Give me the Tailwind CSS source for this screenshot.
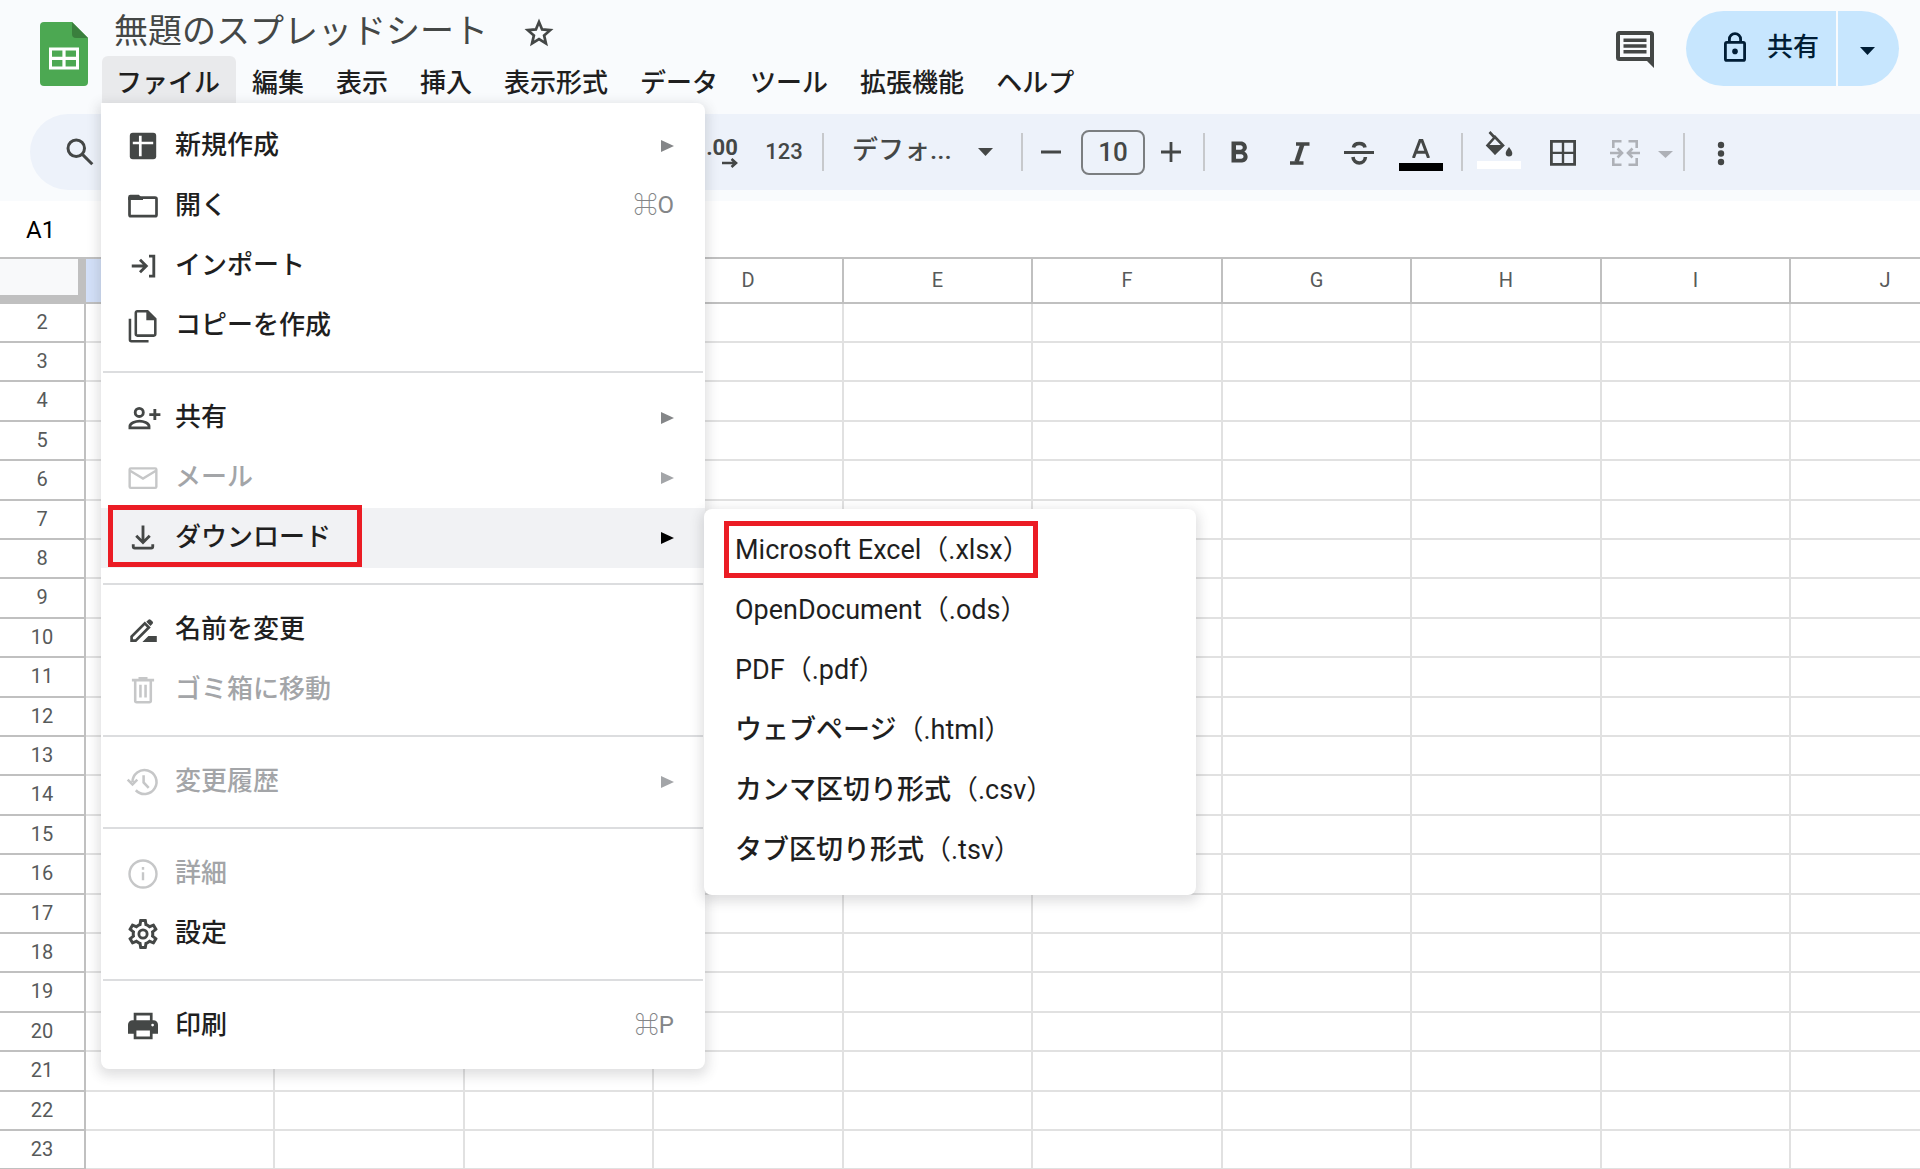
<!DOCTYPE html>
<html lang="ja">
<head>
<meta charset="utf-8">
<meta name="viewport" content="width=device-width, initial-scale=1">
<title>無題のスプレッドシート</title>
<script src="https://cdn.jsdelivr.net/npm/@tailwindcss/browser@4"></script>
</head>
<body class="flex h-screen flex-col overflow-hidden bg-white font-['Roboto','Noto_Sans_CJK_JP',sans-serif] text-[26px] leading-8 text-[#1f1f1f]">

<header class="relative shrink-0 bg-[#f9fbfd] pb-[11px]">
  <div class="flex h-[114px] items-start">
    <a href="#" aria-label="スプレッドシート ホーム" class="ml-10 mt-[22px] shrink-0">
      <svg class="h-16 w-12" viewBox="0 0 48 64"><path d="M4 0h28l16 16v44a4 4 0 0 1-4 4H4a4 4 0 0 1-4-4V4a4 4 0 0 1 4-4z" fill="#4ca852"/><path d="M32 0l16 16H36a4 4 0 0 1-4-4z" fill="#3a7f3d"/><path fill="#fff" fill-rule="evenodd" d="M9 25.500h30v22H9zM12 28.500v6.200h10.400v-6.200zM25.600 28.500v6.200H36v-6.200zM12 38v6.500h10.400V38zM25.600 38v6.500H36V38z"/></svg>
    </a>
    <div class="ml-3.5 flex flex-col">
      <div class="flex h-14 items-center">
        <input type="text" aria-label="ファイル名" value="無題のスプレッドシート" class="ml-3 h-12 w-[400px] bg-transparent text-[34px] text-[#444746] outline-none">
        <button aria-label="スターを付ける" class="ml-2 mt-2.5 text-[#444746]">
          <svg class="size-[34px]" viewBox="0 0 24 24" fill="none" stroke="currentColor" stroke-width="1.900"><path d="M12 4.200l2.200 5.300 5.700.500-4.300 3.700 1.300 5.600L12 16.300l-4.900 3 1.300-5.600L4.100 10l5.700-.500z"/></svg>
        </button>
      </div>
      <nav class="flex" aria-label="メニューバー">
        <button class="h-[52px] rounded-t-md bg-[#e9eaec] pl-3.5 pr-4 pt-0.5 font-medium">ファイル</button>
        <button class="h-[52px] px-4 pt-0.5 font-medium">編集</button>
        <button class="h-[52px] px-4 pt-0.5 font-medium">表示</button>
        <button class="h-[52px] px-4 pt-0.5 font-medium">挿入</button>
        <button class="h-[52px] px-4 pt-0.5 font-medium">表示形式</button>
        <button class="h-[52px] px-4 pt-0.5 font-medium">データ</button>
        <button class="h-[52px] px-4 pt-0.5 font-medium">ツール</button>
        <button class="h-[52px] px-4 pt-0.5 font-medium">拡張機能</button>
        <button class="h-[52px] px-4 pt-0.5 font-medium">ヘルプ</button>
      </nav>
    </div>
    <button aria-label="コメント" class="ml-auto mr-8 mt-[31px] text-[#444746]">
      <svg class="h-[37px] w-[38px]" viewBox="0 0 38 37"><path fill="currentColor" fill-rule="evenodd" d="M3.500 0h31A3.500 3.500 0 0 1 38 3.500V37l-7-7H3.500A3.500 3.500 0 0 1 0 26.500v-23A3.500 3.500 0 0 1 3.500 0zM4 4v22h30V4z"/><path stroke="currentColor" stroke-width="3.600" d="M7.500 9.200h23M7.500 15h23M7.500 20.800h23"/></svg>
    </button>
    <div class="mr-[21px] mt-[11px] flex h-[75px] shrink-0 gap-0.5 font-medium text-[#001d35]">
      <button class="flex w-[150px] items-center gap-5 rounded-l-full bg-[#c7e6fe] pl-[37px]">
        <svg class="-mt-1 h-[30px] w-6" viewBox="0 0 24 30" fill="none" stroke="currentColor" stroke-width="2.800"><rect x="2.400" y="10.400" width="19.200" height="18" rx="1.500"/><path d="M6.400 10V7.200a5.600 5.600 0 0 1 11.200 0V10"/><circle cx="12" cy="19.400" r="2.800" fill="currentColor" stroke="none"/></svg>
        <span class="pb-1">共有</span>
      </button>
      <button aria-label="共有オプション" class="flex w-[61px] items-center rounded-r-full bg-[#c7e6fe] pl-[22px] pt-1">
        <svg class="h-2 w-[15px]" viewBox="0 0 15 8" fill="currentColor"><path d="M0 0h15L7.500 8z"/></svg>
      </button>
    </div>
  </div>

  <div role="toolbar" aria-label="メイン" class="ml-[30px] flex h-[76px] items-center overflow-hidden rounded-l-full bg-[#edf2fa] pl-5 text-[#444746]">
    <button aria-label="メニューを検索" class="flex w-[60px] shrink-0 justify-center">
      <svg class="size-9" viewBox="0 0 24 24" fill="none" stroke="currentColor" stroke-width="2"><circle cx="9.500" cy="9.500" r="5.500"/><path d="M13.600 13.600l6.600 6.600"/></svg>
    </button>
    <button aria-label="小数点以下の桁数を増やす" class="ml-[588px] flex w-12 shrink-0 flex-col items-center text-[22px] font-bold leading-6">
      <span>.00</span>
      <svg class="-mt-0.5 ml-4 h-2.5 w-4" viewBox="0 0 16 10" fill="none" stroke="currentColor" stroke-width="2.600"><path d="M0 5h13M9.500 1l4.500 4-4.500 4"/></svg>
    </button>
    <button class="ml-2 w-[60px] shrink-0 text-[22px] font-medium">123</button>
    <span class="ml-2 h-[38px] w-0.5 shrink-0 bg-[#c7c9cc]"></span>
    <div class="relative ml-4 w-[165px] shrink-0">
      <select aria-label="フォント" class="w-full appearance-none bg-transparent pb-1 pl-3 font-medium outline-none"><option>デフォ...</option></select>
      <svg class="pointer-events-none absolute right-3 top-3.5 h-2 w-[15px]" viewBox="0 0 15 8" fill="currentColor"><path d="M0 0h15L7.500 8z"/></svg>
    </div>
    <span class="ml-4 h-[38px] w-0.5 shrink-0 bg-[#c7c9cc]"></span>
    <button aria-label="フォントサイズを縮小" class="ml-2 flex w-10 shrink-0 justify-center">
      <svg class="size-5" viewBox="0 0 20 20" stroke="currentColor" stroke-width="2.800"><path d="M0 10h20"/></svg>
    </button>
    <input type="text" aria-label="フォントサイズ" value="10" class="ml-2.5 h-[45px] w-16 shrink-0 rounded-lg border-2 border-[#7b7e80] bg-transparent text-center font-medium outline-none">
    <button aria-label="フォントサイズを拡大" class="ml-1.5 flex w-10 shrink-0 justify-center">
      <svg class="size-5" viewBox="0 0 20 20" stroke="currentColor" stroke-width="2.800"><path d="M0 10h20M10 0v20"/></svg>
    </button>
    <span class="ml-3 h-[38px] w-0.5 shrink-0 bg-[#c7c9cc]"></span>
    <button aria-label="太字" class="ml-1 flex w-[60px] shrink-0 justify-center">
      <svg class="size-9" viewBox="0 -1 24 24" fill="currentColor"><path d="M15.600 10.790c.970-.670 1.650-1.770 1.650-2.790 0-2.260-1.750-4-4-4H7v14h7.040c2.090 0 3.710-1.700 3.710-3.790 0-1.520-.860-2.820-2.150-3.420zM10 6.500h3c.830 0 1.500.670 1.500 1.500s-.670 1.500-1.500 1.500h-3v-3zm3.500 9H10v-3h3.500c.830 0 1.500.670 1.500 1.500s-.670 1.500-1.500 1.500z"/></svg>
    </button>
    <button aria-label="斜体" class="flex w-[60px] shrink-0 justify-center">
      <svg class="size-9" viewBox="0 0 36 36" fill="none" stroke="currentColor" stroke-width="3.600"><path d="M15 10h13.500M9 29h13.500"/><path stroke-width="4.400" d="M21.500 10l-6 18"/></svg>
    </button>
    <button aria-label="取り消し線" class="flex w-[60px] shrink-0 justify-center">
      <svg class="size-9" viewBox="0 0 36 36" fill="none" stroke="currentColor" stroke-width="3"><path d="M3 18.500h30"/><path stroke-width="3.600" d="M12.500 13.500c.500-2.800 3-4 5.800-4s5.200 1.200 5.700 4M12 23c.300 4 3.300 6 6.200 6s6-2 6.200-6"/></svg>
    </button>
    <button aria-label="テキストの色" class="flex w-16 shrink-0 flex-col items-center pt-1.5">
      <svg class="h-[19px] w-[18px]" viewBox="0 0 18 19" fill="none" stroke="currentColor" stroke-width="3"><path d="M1.400 19L8 1.500h2L16.600 19M4 13.200h10"/></svg>
      <span class="mt-[5px] h-2 w-11 bg-black"></span>
    </button>
    <span class="ml-2 h-[38px] w-0.5 shrink-0 bg-[#c7c9cc]"></span>
    <button aria-label="塗りつぶしの色" class="ml-1.5 flex w-[60px] shrink-0 flex-col items-center">
      <svg class="h-[26px] w-7" viewBox="0 0 28 26" fill="none" stroke="currentColor" stroke-width="2.600"><path d="M4.500 1l5.500 6M10 6L2.500 14.500 10 22l8-7.500z"/><path fill="currentColor" stroke="none" d="M1.500 14h18L10 24zM24 16c2 2.800 3.300 4.500 3.300 6.300a3.300 3.300 0 0 1-6.600 0C20.700 20.500 22 18.800 24 16z"/></svg>
      <span class="mb-1 mt-1 h-2 w-11 bg-white"></span>
    </button>
    <button aria-label="枠線" class="ml-1 flex w-[60px] shrink-0 justify-center">
      <svg class="size-7" viewBox="0 0 28 28" fill="none" stroke="currentColor" stroke-width="2.800"><path d="M2.400 3.400h23.200v23H2.400z"/><path stroke-width="2.400" d="M14 3.400v23M2.400 14.900h23.200"/></svg>
    </button>
    <button aria-label="セルを結合" disabled class="ml-0.5 flex w-[60px] shrink-0 justify-center text-[#aeb1b7]">
      <svg class="h-7 w-[30px]" viewBox="0 0 30 28" fill="none" stroke="currentColor" stroke-width="2.600"><path d="M11.500 3.300H3.300V10M18.500 3.300h8.200V10M11.500 26.700H3.300V20M18.500 26.700h8.200V20M0 15h11M30 15H19M7.500 10.500L12 15l-4.500 4.500M22.500 10.500L18 15l4.500 4.500"/></svg>
    </button>
    <button aria-label="結合の種類を選択" disabled class="flex w-5 shrink-0 justify-center pt-1 text-[#aeb1b7]">
      <svg class="h-[7px] w-[15px]" viewBox="0 0 15 7" fill="currentColor"><path d="M0 0h15L7.500 7z"/></svg>
    </button>
    <span class="ml-2 h-[38px] w-0.5 shrink-0 bg-[#c7c9cc]"></span>
    <button aria-label="その他" class="ml-1.5 flex w-[60px] shrink-0 justify-center">
      <svg class="size-7" viewBox="0 0 28 28" fill="currentColor"><circle cx="14" cy="7" r="3.200"/><circle cx="14" cy="15.500" r="3.200"/><circle cx="14" cy="24" r="3.200"/></svg>
    </button>
  </div>

  <!-- ファイル menu -->
  <div role="menu" aria-label="ファイル" class="absolute left-[101px] top-[103px] z-10 w-[604px] rounded-b-lg rounded-tr-lg bg-white py-[13px] font-medium shadow-[0_4px_12px_3px_rgba(60,64,67,0.16)]">
    <button role="menuitem" class="flex h-[60px] w-full items-center gap-3.5 pl-6 pr-[31px] text-left">
      <svg class="size-9 text-[#444746]" viewBox="0 0 24 24"><rect x="3.200" y="3.200" width="17.600" height="17.600" rx="2" fill="currentColor"/><path d="M10.200 5.200v13.600M5.200 10h13.600" stroke="#fff" stroke-width="1.800"/></svg>
      <span class="flex-1 pb-0.5">新規作成</span>
      <svg class="h-3 w-[13px] text-[#848688]" viewBox="0 0 13 12" fill="currentColor"><path d="M0 0l13 6-13 6z"/></svg>
    </button>
    <button role="menuitem" class="flex h-[60px] w-full items-center gap-3.5 pl-6 pr-[31px] text-left">
      <svg class="size-9 text-[#444746]" viewBox="0 0 24 24"><rect x="3" y="6.400" width="18" height="12.400" rx="1" fill="none" stroke="currentColor" stroke-width="1.800"/><path fill="currentColor" d="M2.100 8V6a1.500 1.500 0 0 1 1.500-1.500h5.600L12 7.300V8z"/></svg>
      <span class="flex-1 pb-0.5">開く</span>
      <span class="pb-0.5 text-2xl font-normal text-[#848688]"><span class="font-bold">⌘</span>O</span>
    </button>
    <button role="menuitem" class="flex h-[60px] w-full items-center gap-3.5 pl-6 pr-[31px] text-left">
      <svg class="size-9 text-[#444746]" viewBox="0 0 24 24" fill="none" stroke="currentColor" stroke-width="1.900"><path d="M4.500 12h9.500M10 7.800l4.200 4.200-4.200 4.200M16 5.400h3.200v13.300H16"/></svg>
      <span class="flex-1 pb-0.5">インポート</span>
    </button>
    <button role="menuitem" class="flex h-[60px] w-full items-center gap-3.5 pl-6 pr-[31px] text-left">
      <svg class="size-9 overflow-visible text-[#444746]" viewBox="0 0 24 24" fill="none" stroke="currentColor" stroke-width="1.700"><path d="M15 2.200H8.200a1 1 0 0 0-1 1v14.200a1 1 0 0 0 1 1h11a1 1 0 0 0 1-1V7.400z"/><path fill="currentColor" stroke="none" d="M14.200 2v6.200h6.400z"/><path d="M3.300 7.200v14a1 1 0 0 0 1 1h11.400"/></svg>
      <span class="flex-1 pb-0.5">コピーを作成</span>
    </button>
    <hr class="mx-0.5 my-[15px] h-0.5 border-0 bg-[#dcdddf]">
    <button role="menuitem" class="flex h-[60px] w-full items-center gap-3.5 pl-6 pr-[31px] text-left">
      <svg class="size-9 overflow-visible text-[#444746]" viewBox="0 0 24 24" fill="none" stroke="currentColor" stroke-width="1.900"><circle cx="9.500" cy="8.300" r="2.700"/><path d="M3.300 18.600v-1.200c0-1.900 3.700-3.300 6.400-3.300s6.300 1.400 6.300 3.300v1.200zM16.200 9.700h7.400M19.900 6v7.400"/></svg>
      <span class="flex-1 pb-0.5">共有</span>
      <svg class="h-3 w-[13px] text-[#848688]" viewBox="0 0 13 12" fill="currentColor"><path d="M0 0l13 6-13 6z"/></svg>
    </button>
    <button role="menuitem" disabled class="flex h-[60px] w-full items-center gap-3.5 pl-6 pr-[31px] text-left text-[#a3a5a8]">
      <svg class="size-9 text-[#c6c7c8]" viewBox="0 0 24 24" fill="none" stroke="currentColor" stroke-width="1.600"><rect x="3.100" y="5.600" width="17.800" height="13" rx=".8"/><path d="M3.400 7.200l8.600 5.200 8.600-5.200"/></svg>
      <span class="flex-1 pb-0.5">メール</span>
      <svg class="h-3 w-[13px]" viewBox="0 0 13 12" fill="currentColor"><path d="M0 0l13 6-13 6z"/></svg>
    </button>
    <div class="relative">
      <button role="menuitem" aria-haspopup="true" aria-expanded="true" class="flex h-[60px] w-full items-center gap-3.5 bg-[#f1f2f4] pl-6 pr-[31px] text-left">
        <svg class="size-9 text-[#444746]" viewBox="0 0 24 24" fill="none" stroke="currentColor" stroke-width="1.900"><path d="M12 3.600v11.200M7.500 10.500L12 15l4.500-4.500M5.500 16.200v1.500a1 1 0 0 0 1 1h11a1 1 0 0 0 1-1v-1.500"/></svg>
        <span class="flex-1 pb-0.5">ダウンロード</span>
        <svg class="h-3 w-[13px] text-black" viewBox="0 0 13 12" fill="currentColor"><path d="M0 0l13 6-13 6z"/></svg>
      </button>
      <span class="pointer-events-none absolute -top-[3px] left-[7px] h-[62px] w-[254px] border-[5px] border-[#eb1c24]"></span>
      <div role="menu" aria-label="ダウンロード" class="absolute left-[603px] top-px w-[492px] rounded-lg bg-white pb-3.5 pt-3 text-[27px] shadow-[0_4px_12px_3px_rgba(60,64,67,0.16)]">
        <button role="menuitem" class="block h-[60px] w-full pb-0.5 pl-[31px] text-left font-normal">Microsoft Excel（.xlsx）</button>
        <button role="menuitem" class="block h-[60px] w-full pb-0.5 pl-[31px] text-left font-normal">OpenDocument（.ods）</button>
        <button role="menuitem" class="block h-[60px] w-full pb-0.5 pl-[31px] text-left font-normal">PDF（.pdf）</button>
        <button role="menuitem" class="block h-[60px] w-full pb-0.5 pl-[31px] text-left font-normal"><span class="font-medium">ウェブページ</span>（.html）</button>
        <button role="menuitem" class="block h-[60px] w-full pb-0.5 pl-[31px] text-left font-normal"><span class="font-medium">カンマ区切り形式</span>（.csv）</button>
        <button role="menuitem" class="block h-[60px] w-full pb-0.5 pl-[31px] text-left font-normal"><span class="font-medium">タブ区切り形式</span>（.tsv）</button>
        <span class="pointer-events-none absolute left-5 top-3 h-[57px] w-[314px] border-[5px] border-[#eb1c24]"></span>
      </div>
    </div>
    <hr class="mx-0.5 my-[15px] h-0.5 border-0 bg-[#dcdddf]">
    <button role="menuitem" class="flex h-[60px] w-full items-center gap-3.5 pl-6 pr-[31px] text-left">
      <svg class="size-9 text-[#444746]" viewBox="0 0 24 24"><path fill="none" stroke="currentColor" stroke-width="1.800" d="M4.400 19.100v-2.700l8.800-8.800 2.700 2.700-8.800 8.800z"/><path fill="currentColor" d="M14.200 6.500l1.400-1.400a1.100 1.100 0 0 1 1.500 0l1.300 1.300a1.100 1.100 0 0 1 0 1.500L17 9.300zM11.600 20l4-4h5.600v4z"/></svg>
      <span class="flex-1 pb-0.5">名前を変更</span>
    </button>
    <button role="menuitem" disabled class="flex h-[60px] w-full items-center gap-3.5 pl-6 pr-[31px] text-left text-[#a3a5a8]">
      <svg class="size-9 text-[#c6c7c8]" viewBox="0 0 24 24" fill="none" stroke="currentColor" stroke-width="1.700"><path d="M4.600 5.400h14.800M9 4.200h6M6.800 5.600v13.600a1 1 0 0 0 1 1h8.400a1 1 0 0 0 1-1V5.600M10.300 8.500v8.500M13.700 8.500v8.500"/></svg>
      <span class="flex-1 pb-0.5">ゴミ箱に移動</span>
    </button>
    <hr class="mx-0.5 my-[15px] h-0.5 border-0 bg-[#dcdddf]">
    <button role="menuitem" disabled class="flex h-[60px] w-full items-center gap-3.5 pl-6 pr-[31px] text-left text-[#a3a5a8]">
      <svg class="size-9 text-[#c6c7c8]" viewBox="0 0 24 24" fill="none" stroke="currentColor" stroke-width="1.700"><path d="M5 12a8 8 0 1 1 2.200 5.500M1.800 10.400L5 13.600l3.200-3.200M12.400 7.500v4.800l3.400 3.600"/></svg>
      <span class="flex-1 pb-0.5">変更履歴</span>
      <svg class="h-3 w-[13px]" viewBox="0 0 13 12" fill="currentColor"><path d="M0 0l13 6-13 6z"/></svg>
    </button>
    <hr class="mx-0.5 my-[15px] h-0.5 border-0 bg-[#dcdddf]">
    <button role="menuitem" disabled class="flex h-[60px] w-full items-center gap-3.5 pl-6 pr-[31px] text-left text-[#a3a5a8]">
      <svg class="size-9 text-[#c6c7c8]" viewBox="0 0 24 24" fill="none" stroke="currentColor" stroke-width="1.600"><circle cx="12" cy="12" r="9"/><path d="M12 10.800v5.400M12 7.400v1.800"/></svg>
      <span class="flex-1 pb-0.5">詳細</span>
    </button>
    <button role="menuitem" class="flex h-[60px] w-full items-center gap-3.5 pl-6 pr-[31px] text-left">
      <svg class="size-9 text-[#444746]" viewBox="0 0 24 24" fill="currentColor"><path d="M19.430 12.980c.040-.320.070-.640.070-.980 0-.340-.030-.660-.070-.980l2.110-1.650c.190-.150.240-.420.120-.640l-2-3.460a.5.5 0 0 0-.610-.220l-2.490 1c-.520-.400-1.080-.730-1.690-.980l-.380-2.650A.488.488 0 0 0 14 2h-4c-.250 0-.460.180-.490.420l-.380 2.650c-.610.250-1.170.590-1.690.980l-2.490-1a.566.566 0 0 0-.180-.030c-.170 0-.340.090-.430.250l-2 3.460c-.130.220-.070.490.120.640l2.110 1.650c-.040.320-.070.650-.070.980 0 .330.030.660.070.980l-2.110 1.650c-.190.150-.240.420-.120.640l2 3.460a.5.5 0 0 0 .610.220l2.490-1c.520.400 1.080.730 1.690.980l.380 2.650c.030.240.240.420.490.420h4c.250 0 .460-.180.490-.420l.380-2.650c.610-.250 1.170-.590 1.690-.980l2.490 1c.060.020.120.030.180.030.170 0 .340-.090.430-.250l2-3.460c.120-.220.070-.490-.120-.640l-2.110-1.650zm-1.980-1.710c.040.310.050.520.050.730 0 .210-.020.430-.050.730l-.140 1.130.890.700 1.080.840-.700 1.210-1.270-.510-1.040-.420-.900.680c-.430.320-.840.560-1.250.730l-1.060.430-.160 1.130-.200 1.350h-1.400l-.190-1.350-.160-1.130-1.060-.430c-.430-.180-.830-.410-1.230-.710l-.910-.700-1.060.430-1.270.510-.700-1.210 1.080-.840.890-.700-.140-1.130c-.030-.310-.050-.540-.050-.740s.020-.430.050-.730l.140-1.130-.890-.700-1.080-.840.700-1.210 1.270.510 1.040.420.900-.680c.430-.320.840-.560 1.250-.730l1.060-.430.160-1.130.200-1.350h1.390l.190 1.350.160 1.130 1.060.430c.430.180.830.410 1.230.710l.910.700 1.060-.430 1.270-.510.700 1.210-1.070.850-.890.700.140 1.130zM12 8.300a3.700 3.700 0 1 0 0 7.400 3.700 3.700 0 0 0 0-7.400zm0 5.500a1.800 1.800 0 1 1 0-3.600 1.800 1.800 0 0 1 0 3.600z"/></svg>
      <span class="flex-1 pb-0.5">設定</span>
    </button>
    <hr class="mx-0.5 my-[15px] h-0.5 border-0 bg-[#dcdddf]">
    <button role="menuitem" class="flex h-[60px] w-full items-center gap-3.5 pl-6 pr-[31px] text-left">
      <svg class="size-9 text-[#444746]" viewBox="0 0 24 24"><path fill="currentColor" fill-rule="evenodd" d="M5.800 3.200h12.600v5h.600a3 3 0 0 1 3 3v6h-3.600v3.600H5.800v-3.600H2v-6a3 3 0 0 1 3-3h.800zM7.600 5v3.200h9V5zM7.600 15v4h9v-4z"/><circle cx="18.400" cy="11.400" r=".9" fill="#fff"/></svg>
      <span class="flex-1 pb-0.5">印刷</span>
      <span class="pb-0.5 text-2xl font-normal text-[#848688]"><span class="font-bold">⌘</span>P</span>
    </button>
  </div>
</header>

<div class="flex h-14 shrink-0 items-center">
  <input type="text" aria-label="名前ボックス" value="A1" class="ml-[26px] w-16 bg-transparent pt-0.5 text-2xl text-black outline-none">
</div>

<main class="min-h-0 flex-1 overflow-hidden border-t-2 border-[#c0c0c0]">
  <table class="w-[1981px] table-fixed border-separate border-spacing-0 text-xl leading-6 text-[#575a5a]">
    <colgroup>
      <col class="w-[86px]">
      <col class="w-[189px]"><col class="w-[190px]"><col class="w-[189px]"><col class="w-[190px]"><col class="w-[189px]">
      <col class="w-[190px]"><col class="w-[189px]"><col class="w-[190px]"><col class="w-[189px]"><col class="w-[190px]">
    </colgroup>
    <thead><tr id="columns" class="h-[45px]"><td class="border-b-[9px] border-r-[8px] border-[#c0c0c0] bg-[#f8f9fa]"></td></tr></thead>
    <tbody id="rows"></tbody>
  </table>
</main>

<script>
  const letters = [...'ABCDEFGHIJ'];
  document.getElementById('columns').insertAdjacentHTML('beforeend', letters.map((letter, i) =>
    `<th scope="col" class="border-b-2 border-r-2 border-[#c0c0c0] px-0 pb-0.5 pt-0 font-normal ${i === 0 ? 'bg-[#d3e0f8]' : 'bg-white'}">${letter}</th>`).join(''));
  let html = '';
  for (let n = 2; n <= 23; n++) {
    html += '<tr class="h-[39px] nth-[5n+3]:h-10 nth-[5n]:h-10"><th scope="row" class="border-b-2 border-r-2 border-[#c0c0c0] px-0 pb-0.5 pt-0 font-normal">' + n + '</th>'
      + '<td class="border-b-2 border-r-2 border-[#e1e1e1] p-0"></td>'.repeat(letters.length) + '</tr>';
  }
  document.getElementById('rows').innerHTML = html;
</script>
</body>
</html>
